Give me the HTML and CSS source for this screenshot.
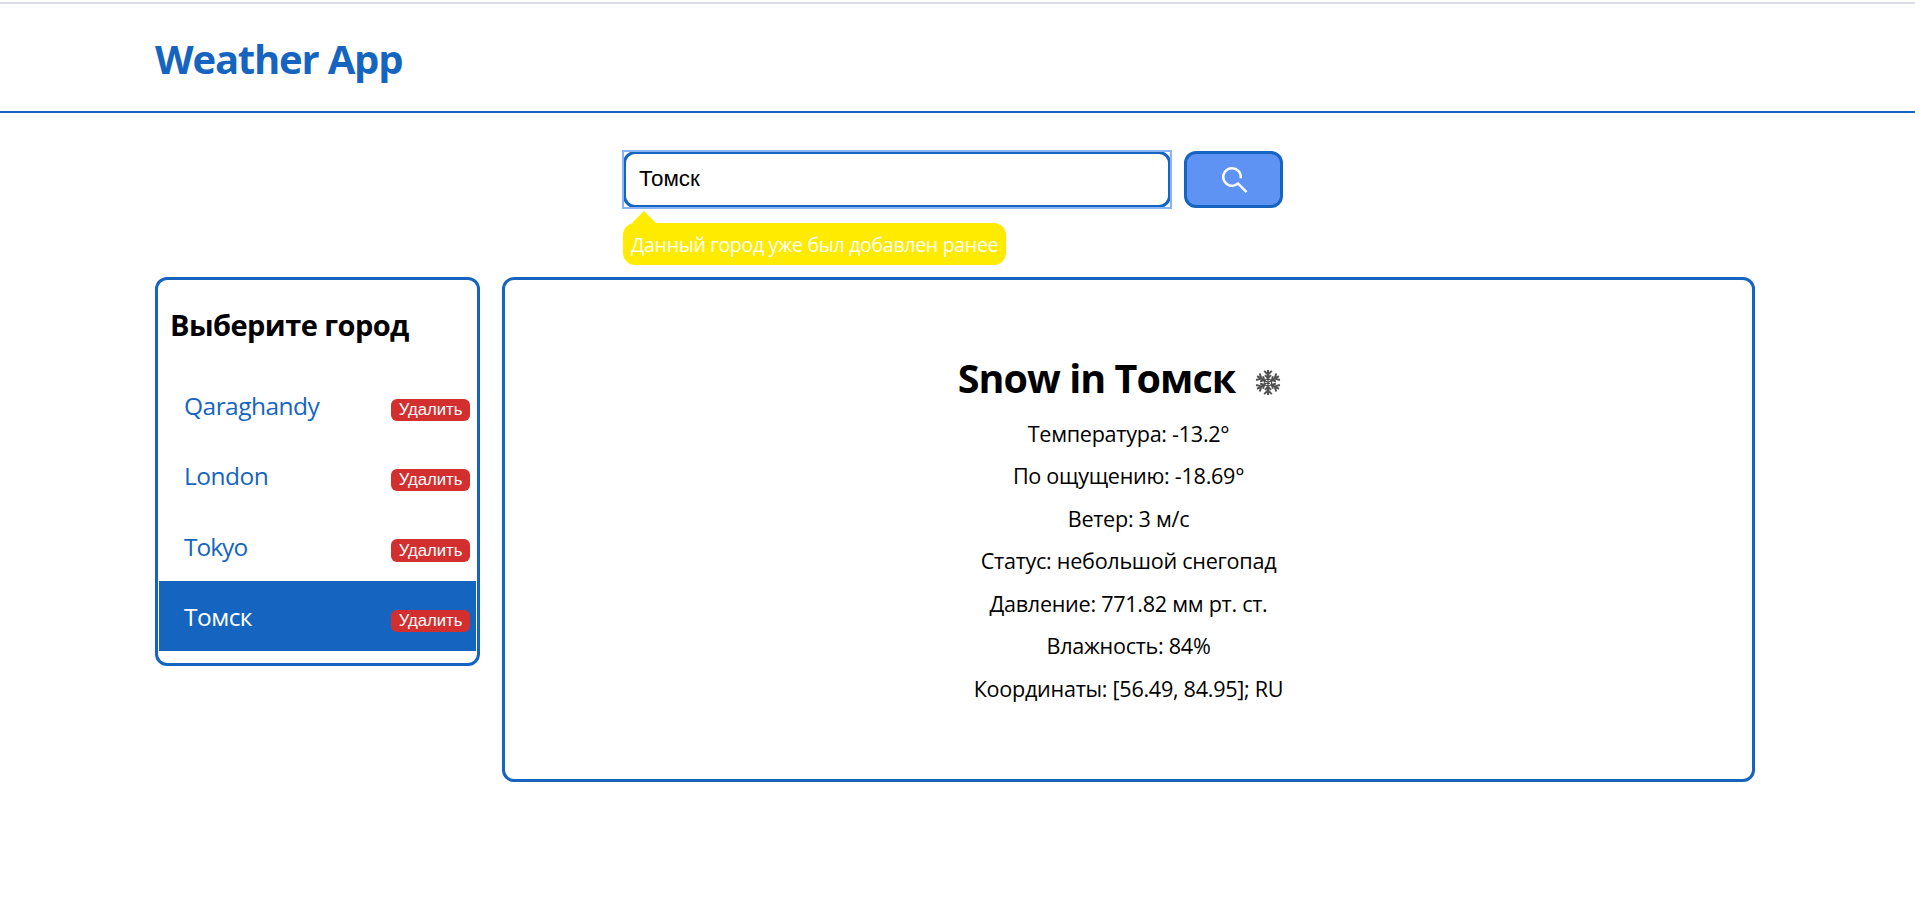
FILE: index.html
```html
<!DOCTYPE html>
<html lang="ru">
<head>
<meta charset="utf-8">
<title>Weather App</title>
<link rel="stylesheet" href="styles.css">
</head>
<body>
<header class="header"><h1 class="logo">Weather App</h1></header>
<main class="container">
  <form class="search">
    <div class="field">
      <input class="search-input" type="text" value="Томск">
      <div class="tooltip">Данный город уже был добавлен ранее</div>
    </div>
    <button class="search-button" type="button" aria-label="Поиск">
      <svg class="search-icon" viewBox="0 0 26 26"><path d="M19.7 11.3A8.8 8.8 0 1 0 15.9 17.3L16.9 16.1M16.4 15.9L25.6 25.1"/></svg>
    </button>
  </form>
  <div class="content">
    <aside class="cities">
      <h2 class="cities-title">Выберите город</h2>
      <ul class="cities-list">
        <li class="city"><span class="city-name">Qaraghandy</span><button class="delete" type="button">Удалить</button></li>
        <li class="city"><span class="city-name">London</span><button class="delete" type="button">Удалить</button></li>
        <li class="city"><span class="city-name city-name-tight">Tokyo</span><button class="delete" type="button">Удалить</button></li>
        <li class="city city-active"><span class="city-name">Томск</span><button class="delete" type="button">Удалить</button></li>
      </ul>
    </aside>
    <section class="weather">
      <h2 class="weather-title"><span>Snow in Томск</span>
        <svg class="snow" viewBox="-13 -13.5 26 27">
          <defs><g id="arm"><path d="M0-4V-12.6M-3.8-11.6L0-7.8L3.8-11.6M-3-7.4L0-4.4L3-7.4"/></g></defs>
          <use href="#arm"/><use href="#arm" transform="rotate(60)"/><use href="#arm" transform="rotate(120)"/><use href="#arm" transform="rotate(180)"/><use href="#arm" transform="rotate(240)"/><use href="#arm" transform="rotate(300)"/>
          <path d="M0-4L3.5-2V2L0 4L-3.5 2V-2ZM0-4V4M-3.5-2L3.5 2M-3.5 2L3.5-2" class="snow-core"/>
        </svg>
      </h2>
      <p class="row">Температура: -13.2°</p>
      <p class="row">По ощущению: -18.69°</p>
      <p class="row">Ветер: 3 м/с</p>
      <p class="row">Статус: небольшой снегопад</p>
      <p class="row">Давление: 771.82 мм рт. ст.</p>
      <p class="row">Влажность: 84%</p>
      <p class="row">Координаты: [56.49, 84.95]; RU</p>
    </section>
  </div>
</main>
</body>
</html>
```
FILE: styles.css
```css
* { box-sizing: border-box; margin: 0; padding: 0; }
body {
  padding-top: 2px;
  background: #fff;
  color: #000;
  font-family: "Open Sans", "Noto Sans", sans-serif;
  overflow: hidden;
}
.header {
  height: 111px;
  border-top: 2px solid #dadce3;
  border-bottom: 2px solid #1565c0;
  padding: 1px 0 0 155px;
}
.logo {
  color: #1565c0;
  font-size: 40px;
  line-height: 107px;
  letter-spacing: -1.2px;
}
.container { width: 1600px; margin-left: 155px; }
.search {
  display: flex;
  gap: 13px;
  height: 164px;
  padding: 38px 0 0 468px;
}
.field { position: relative; width: 548px; height: 57px; }
.search-input {
  display: block;
  width: 548px;
  height: 57px;
  padding: 0 13px 2px;
  border: 3px solid #1565c0;
  border-radius: 12px;
  background: #fff;
  color: #000;
  outline: none;
  font: 22.4px "Liberation Sans", Arial, sans-serif;
}
.field::after {
  content: "";
  position: absolute;
  inset: -1px;
  border: 2px solid #8ab4f8;
  pointer-events: none;
}
.tooltip {
  position: absolute;
  left: 0;
  top: 72px;
  width: 383px;
  height: 42px;
  padding-left: 8px;
  border-radius: 12px;
  background: #ffeb00;
  color: #fff;
  font-size: 19.5px;
  line-height: 44px;
  letter-spacing: -.29px;
  white-space: nowrap;
}
.tooltip::before {
  content: "";
  position: absolute;
  left: 8.5px;
  top: -12px;
  border: 12px solid transparent;
  border-top: 0;
  border-bottom-color: #ffeb00;
}
.search-button {
  display: flex;
  align-items: center;
  justify-content: center;
  width: 99px;
  height: 57px;
  border: 3px solid #1565c0;
  border-radius: 12px;
  background: #5e92f3;
}
.search-icon {
  width: 26px;
  height: 26px;
  overflow: visible;
  fill: none;
  stroke: #fff;
  stroke-width: 2.4;
}
.content { display: flex; align-items: flex-start; gap: 22px; }
.cities {
  width: 325px;
  padding: 25px 1px 12px;
  border: 3px solid #1565c0;
  border-radius: 12px;
}
.cities-title {
  height: 64.4px;
  padding-left: 11px;
  font-size: 29px;
  line-height: 40px;
  letter-spacing: -.56px;
}
.cities-list { list-style: none; }
.city {
  display: flex;
  align-items: center;
  justify-content: space-between;
  height: 70.4px;
  padding: 0 6px 0 25px;
  color: #1565c0;
}
.city-active { background: #1565c0; color: #fff; }
.city-name { padding-top: 2px; font-size: 24.5px; letter-spacing: -.52px; }
.city-name-tight { letter-spacing: -1px; }
.delete {
  width: 79px;
  height: 22.4px;
  margin-top: 10.6px;
  border: 0;
  border-radius: 6px;
  background: #d32f2f;
  color: #fff;
  font: 16.7px/20px "Liberation Sans", Arial, sans-serif;
}
.weather {
  width: 1253px;
  height: 505px;
  padding-top: 71px;
  border: 3px solid #1565c0;
  border-radius: 12px;
  text-align: center;
}
.weather-title {
  display: flex;
  justify-content: center;
  align-items: center;
  gap: 20px;
  height: 61.5px;
  padding: 0 18px 7px 0;
  font-size: 39.5px;
  line-height: 54px;
  letter-spacing: -.95px;
}
.snow {
  width: 26px;
  height: 27px;
  margin-top: 8px;
  fill: none;
  stroke: #505050;
  stroke-width: 2;
}
.snow-core { stroke-width: 1.3; }
.row {
  font-size: 21.6px;
  line-height: 42.6px;
  letter-spacing: -.28px;
}
```
